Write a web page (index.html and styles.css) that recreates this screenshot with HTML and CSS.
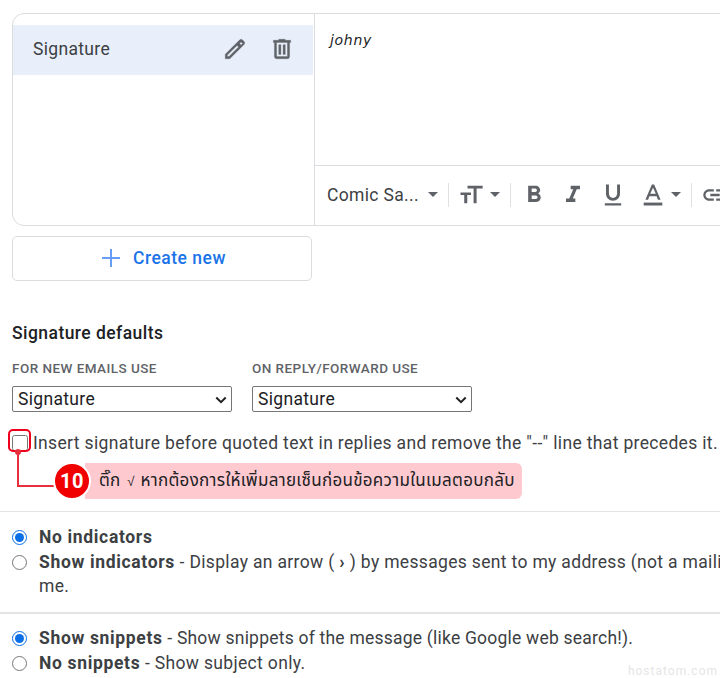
FILE: index.html
```html
<!DOCTYPE html>
<html lang="en">
<head>
<meta charset="utf-8">
<title>Signature settings</title>
<link rel="stylesheet" href="styles.css">
</head>
<body>
<main class="page">
  <section class="card">
    <div class="list">
      <div class="row">
        <span class="row-name">Signature</span>
        <svg class="row-icon pencil" viewBox="0 0 24 24"><path d="M3 21v-4.200L16.200 3.600a2 2 0 0 1 2.800 0l1.400 1.400a2 2 0 0 1 0 2.800L7.200 21H3zm2-2h1.400L15.300 10.100 13.900 8.700 5 17.600V19zm12.600-10.700 1.400-1.400-1.400-1.400-1.400 1.400 1.400 1.400z"/></svg>
        <svg class="row-icon trash" viewBox="0 0 24 24"><path d="M7 21a2 2 0 0 1-2-2V6H4V4h5V3h6v1h5v2h-1v13a2 2 0 0 1-2 2H7zM17 6H7v13h10V6zM9 17h2V8H9v9zm4 0h2V8h-2v9z"/></svg>
      </div>
    </div>
    <div class="editor">
      <div class="editor-body"><span class="johny">johny</span></div>
      <div class="toolbar">
        <span class="font-name">Comic Sa...</span>
        <span class="caret"></span>
        <span class="sep sep-a"></span>
        <svg class="tool size" viewBox="0 0 24 24"><path d="M9 4v2.500h5.200V19h2.600V6.500H22V4H9zm-6 8h3.200v7h2.600v-7H12V9.800H3V12z"/></svg>
        <span class="caret"></span>
        <span class="sep sep-b"></span>
        <svg class="tool bold" viewBox="0 0 24 24"><path d="M15.600 10.790c.97-.67 1.650-1.770 1.650-2.790 0-2.260-1.750-4-4-4H7v14h7.040c2.090 0 3.710-1.700 3.710-3.790 0-1.520-.86-2.820-2.150-3.420zM10 6.500h3c.83 0 1.500.67 1.500 1.500s-.67 1.500-1.500 1.500h-3v-3zm3.500 9H10v-3h3.500c.83 0 1.500.67 1.500 1.500s-.67 1.500-1.500 1.500z"/></svg>
        <svg class="tool italic" viewBox="0 0 24 24"><path d="M10 4v3h2.210l-3.420 8H6v3h8v-3h-2.210l3.420-8H18V4z"/></svg>
        <svg class="tool underline" viewBox="0 0 24 24"><path d="M12 17c3.310 0 6-2.690 6-6V3h-2.500v8c0 1.930-1.570 3.500-3.500 3.500S8.500 12.930 8.500 11V3H6v8c0 3.310 2.690 6 6 6zm-7 2v2h14v-2H5z"/></svg>
        <svg class="tool color" viewBox="0 0 24 24"><path d="M11 3 5.500 16h2.300l1.100-3h6.200l1.100 3h2.300L13 3h-2zm-1.400 8L12 5.700 14.400 11H9.600z"/><path d="M4 18.500h16V21H4z"/></svg>
        <span class="caret"></span>
        <span class="sep sep-c"></span>
        <svg class="tool link" viewBox="0 0 24 24"><path d="M3.900 12c0-1.710 1.390-3.100 3.100-3.100h4V7H7c-2.760 0-5 2.240-5 5s2.240 5 5 5h4v-1.900H7c-1.710 0-3.100-1.390-3.100-3.100zM8 13h8v-2H8v2zm9-6h-4v1.900h4c1.710 0 3.100 1.390 3.100 3.100s-1.390 3.100-3.100 3.100h-4V17h4c2.760 0 5-2.240 5-5s-2.240-5-5-5z"/></svg>
      </div>
    </div>
  </section>

  <button class="create" type="button">
    <svg class="plus" viewBox="0 0 20 20"><path d="M9 1h2v8h8v2h-8v8H9v-8H1V9h8z"/></svg>
    <span>Create new</span>
  </button>

  <h2 class="defaults">Signature defaults</h2>
  <div class="selects">
    <label class="field">
      <span class="field-label">FOR NEW EMAILS USE</span>
      <span class="select-wrap">
        <select class="field-select"><option>Signature</option></select>
        <svg class="chevron" viewBox="0 0 14 9"><path d="M1.500 1.500 7 7l5.500-5.500"/></svg>
      </span>
    </label>
    <label class="field">
      <span class="field-label">ON REPLY/FORWARD USE</span>
      <span class="select-wrap">
        <select class="field-select"><option>Signature</option></select>
        <svg class="chevron" viewBox="0 0 14 9"><path d="M1.500 1.500 7 7l5.500-5.500"/></svg>
      </span>
    </label>
  </div>

  <div class="insert">
    <input class="check" type="checkbox">
    <span class="insert-text">Insert signature before quoted text in replies and remove the "--" line that precedes it.</span>
    <span class="check-ring"></span>
    <span class="connector"></span>
    <span class="connector-dot"></span>
  </div>

  <div class="note">
    <span class="badge">10</span>
    <span class="note-text">ติ๊ก <span class="tick">√</span> หากต้องการให้เพิ่มลายเซ็นก่อนข้อความในเมลตอบกลับ</span>
  </div>

  <section class="group group-first">
    <label class="option"><input type="radio" name="ind" checked><span class="option-text"><b>No indicators</b></span></label>
    <label class="option"><input type="radio" name="ind"><span class="option-text"><b>Show indicators</b> - Display an arrow ( <b class="arrow">›</b> ) by messages sent to my address (not a mailing</span></label>
    <div class="option-cont">me.</div>
  </section>

  <section class="group group-second">
    <label class="option"><input type="radio" name="snip" checked><span class="option-text tight"><b>Show snippets</b> - Show snippets of the message (like Google web search!).</span></label>
    <label class="option"><input type="radio" name="snip"><span class="option-text"><b>No snippets</b> - Show subject only.</span></label>
  </section>
  <span class="watermark">hostatom.com</span>
</main>
</body>
</html>
```
FILE: styles.css
```css
* { box-sizing: border-box; }
html, body { margin: 0; padding: 0; background: #fff; }
body { width: 720px; height: 678px; overflow: hidden; font-family: Roboto, "Noto Sans CJK SC", sans-serif; color: #202124; }
.page { position: relative; width: 720px; height: 678px; overflow: hidden; padding-top: 13px; }

.card { display: flex; width: 760px; height: 213px; margin-left: 12px; border: 1px solid #dadce0; border-radius: 12px 0 0 12px; }
.list { width: 301px; flex: none; padding-top: 11px; }
.row { display: flex; align-items: center; height: 50px; margin-right: 1px; background: #e8effb; padding: 0 18px 2px 20px; }
.row-name { font-size: 17.500px; letter-spacing: .33px; color: #3c4043; flex: 1; }
.row-icon { width: 26px; height: 26px; fill: #5f6368; stroke: #5f6368; stroke-width: .3; flex: none; }
.pencil { margin-right: 21px; }

.editor { flex: 1; display: flex; flex-direction: column; border-left: 1px solid #dadce0; }
.editor-body { height: 152px; padding: 16px 15px; border-bottom: 1px solid #dadce0; }
.johny { font-family: "DejaVu Sans", sans-serif; font-style: italic; font-size: 14px; letter-spacing: .7px; color: #202124; }
.toolbar { flex: 1; display: flex; align-items: center; padding: 0 0 2px 12px; }
.font-name { font-size: 17.500px; letter-spacing: .33px; color: #3c4043; width: 101px; white-space: nowrap; }
.caret { width: 0; height: 0; border-left: 5px solid transparent; border-right: 5px solid transparent; border-top: 5px solid #5f6368; flex: none; }
.sep { width: 1px; height: 24px; background: #e0e0e0; flex: none; }
.sep-a { margin: 0 8px 0 10px; }
.sep-b { margin: 0 9px 0 10px; }
.sep-c { margin: 0 9px 0 10px; }
.tool { width: 28px; height: 28px; fill: #5f6368; flex: none; }
.size { margin-right: 5px; }
.bold { margin-right: 11px; }
.italic { margin-right: 12px; }
.underline { margin-right: 12px; }
.color { margin-right: 4px; }

.create { display: flex; align-items: center; justify-content: center; gap: 12px; width: 300px; height: 45px; margin: 10px 0 0 12px; background: #fff; border: 1px solid #dadce0; border-radius: 5px; font: 500 17.500px Roboto, sans-serif; letter-spacing: .5px; color: #1a73e8; padding: 0 0 2px 3px; }
.plus { width: 20px; height: 20px; fill: #669df6; }

.defaults { margin: 41px 0 0 12px; font-size: 17.500px; font-weight: 500; letter-spacing: .45px; line-height: 22px; color: #202124; }

.selects { display: flex; gap: 20px; margin: 15px 0 0 12px; }
.field { display: flex; flex-direction: column; width: 220px; }
.field-label { font-size: 13.500px; font-weight: 500; letter-spacing: .45px; line-height: 18px; color: #5f6368; }
.select-wrap { position: relative; display: block; margin-top: 9px; height: 26px; }
.field-select { appearance: none; display: block; width: 220px; height: 26px; font: 17.500px Roboto, sans-serif; letter-spacing: .33px; color: #202124; background: #fff; border: 1px solid #767676; border-radius: 2px; padding: 0 0 0 5px; }
.chevron { position: absolute; right: 5px; top: 10px; width: 12px; height: 8px; fill: none; stroke: #202124; stroke-width: 2.300; pointer-events: none; }

.insert { position: relative; display: flex; align-items: center; height: 22px; margin: 20px 0 0 12px; white-space: nowrap; }
.check { width: 16px; height: 16px; margin: 0 5px 0 0; flex: none; }
.insert-text { font-size: 17.500px; letter-spacing: .34px; color: #3c4043; }
.check-ring { position: absolute; left: -4px; top: -3px; width: 23px; height: 23px; border: 2px solid #f0001c; border-radius: 5px; }
.connector { position: absolute; left: 5px; top: 19px; width: 38px; height: 36px; border-left: 2px solid #e8303c; border-bottom: 2px solid #e8303c; }
.connector-dot { position: absolute; left: 3px; top: 17px; width: 6px; height: 6px; border-radius: 50%; background: #e8303c; }

.note { position: relative; display: flex; align-items: center; height: 36px; width: 437px; margin: 9px 0 0 85px; padding-left: 14px; background: #ffc9d0; border-radius: 0 6px 6px 0; }
.badge { position: absolute; left: -32px; top: -1px; width: 38px; height: 38px; border-radius: 50%; background: #f00000; border: 2px solid #fff; color: #fff; font-size: 20px; font-weight: 700; letter-spacing: .5px; display: flex; align-items: center; justify-content: center; }
.note-text { font-family: "Noto Sans", "Noto Sans Thai", "Noto Sans CJK SC", sans-serif; font-size: 17px; letter-spacing: .3px; color: #202124; white-space: nowrap; }
.tick { font-family: "Liberation Sans", sans-serif; font-size: 13px; margin: 0 1px 0 2px; }

.group { border-top: 1px solid #e4e4e4; }
.group-first { margin-top: 12px; padding-top: 12px; height: 101px; }
.group-second { border-top-width: 2px; padding-top: 11px; }
.option { display: flex; align-items: center; height: 25px; padding-left: 12px; white-space: nowrap; }
.option input { width: 15px; height: 15px; margin: 1px 12px 0 0; accent-color: #0b6fe8; flex: none; }
.option-text { font-size: 17.500px; letter-spacing: .33px; color: #3c4043; }
.option-text.tight { letter-spacing: .22px; }
.option-text b { font-weight: 700; letter-spacing: .66px; color: #3c4043; }
.option-cont { padding-left: 39px; height: 25px; line-height: 25px; font-size: 17.500px; letter-spacing: .33px; color: #3c4043; }
.watermark { position: absolute; right: 2px; bottom: 0; font-size: 12px; letter-spacing: 1px; color: #e6e6e6; }
```
